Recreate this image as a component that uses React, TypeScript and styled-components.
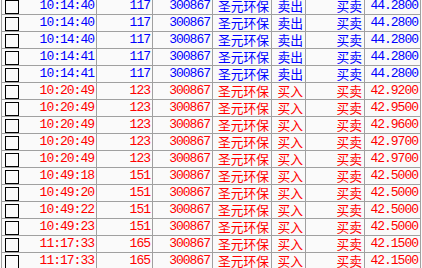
import React from "react";
import styled, { createGlobalStyle } from "styled-components";

type Trade = {
    time: string;
    qty: string;
    code: string;
    name: string;
    side: "卖出" | "买入";
    kind: string;
    price: string;
};

const trades: Trade[] = [
    { time: "10:14:40", qty: "117", code: "300867", name: "圣元环保", side: "卖出", kind: "买卖", price: "44.2800" },
    { time: "10:14:40", qty: "117", code: "300867", name: "圣元环保", side: "卖出", kind: "买卖", price: "44.2800" },
    { time: "10:14:40", qty: "117", code: "300867", name: "圣元环保", side: "卖出", kind: "买卖", price: "44.2800" },
    { time: "10:14:41", qty: "117", code: "300867", name: "圣元环保", side: "卖出", kind: "买卖", price: "44.2800" },
    { time: "10:14:41", qty: "117", code: "300867", name: "圣元环保", side: "卖出", kind: "买卖", price: "44.2800" },
    { time: "10:20:49", qty: "123", code: "300867", name: "圣元环保", side: "买入", kind: "买卖", price: "42.9200" },
    { time: "10:20:49", qty: "123", code: "300867", name: "圣元环保", side: "买入", kind: "买卖", price: "42.9500" },
    { time: "10:20:49", qty: "123", code: "300867", name: "圣元环保", side: "买入", kind: "买卖", price: "42.9600" },
    { time: "10:20:49", qty: "123", code: "300867", name: "圣元环保", side: "买入", kind: "买卖", price: "42.9700" },
    { time: "10:20:49", qty: "123", code: "300867", name: "圣元环保", side: "买入", kind: "买卖", price: "42.9700" },
    { time: "10:49:18", qty: "151", code: "300867", name: "圣元环保", side: "买入", kind: "买卖", price: "42.5000" },
    { time: "10:49:20", qty: "151", code: "300867", name: "圣元环保", side: "买入", kind: "买卖", price: "42.5000" },
    { time: "10:49:22", qty: "151", code: "300867", name: "圣元环保", side: "买入", kind: "买卖", price: "42.5000" },
    { time: "10:49:23", qty: "151", code: "300867", name: "圣元环保", side: "买入", kind: "买卖", price: "42.5000" },
    { time: "11:17:33", qty: "165", code: "300867", name: "圣元环保", side: "买入", kind: "买卖", price: "42.1500" },
    { time: "11:17:33", qty: "165", code: "300867", name: "圣元环保", side: "买入", kind: "买卖", price: "42.1500" },
];

function App(): React.ReactElement {
    return (
        <>
            <GlobalStyle />
            <Grid>
                {trades.map((t, i) => (
                    <Row key={i} $sell={t.side === "卖出"}>
                        <FirstCell>
                            <CheckBox />
                            <Num>{t.time}</Num>
                        </FirstCell>
                        <Cell><Num>{t.qty}</Num></Cell>
                        <Cell><Num>{t.code}</Num></Cell>
                        <Cell><Han>{t.name}</Han></Cell>
                        <Cell><Han>{t.side}</Han></Cell>
                        <Cell><Han>{t.kind}</Han></Cell>
                        <Cell><Num>{t.price}</Num></Cell>
                    </Row>
                ))}
            </Grid>
        </>
    );
}

const GlobalStyle = createGlobalStyle`
    html, body {
        margin: 0;
        padding: 0;
        background: #fafafa;
        overflow: hidden;
    }
`;

const Grid = styled.div`
    margin-top: -2px;
    margin-left: 1px;
    border-left: 1px solid #a0a0a0;
    width: 419px;
`;

const Row = styled.div<{ $sell: boolean }>`
    display: grid;
    grid-template-columns: 95px 56px 60px 59px 34px 59px 56px;
    height: 17px;
    box-sizing: border-box;
    border-bottom: 1px solid #a0a0a0;
    color: ${(p) => (p.$sell ? "#0000ff" : "#ff0000")};
`;

const Cell = styled.div`
    display: flex;
    align-items: center;
    justify-content: flex-end;
    box-sizing: border-box;
    border-right: 1px solid #a0a0a0;
    padding-right: 2px;
    height: 16px;
    white-space: nowrap;
`;

const FirstCell = styled(Cell)`
    justify-content: space-between;
    align-items: flex-start;
    padding-left: 3px;
`;

const CheckBox = styled.span`
    display: block;
    width: 14px;
    height: 14px;
    margin-top: 2px;
    box-sizing: border-box;
    border: 1px solid #000;
`;

const Num = styled.span`
    font-family: "Liberation Mono", monospace;
    font-size: 13px;
    letter-spacing: -1px;
    line-height: 16px;
`;

const Han = styled.span`
    font-family: "Noto Sans CJK SC", sans-serif;
    font-size: 12.75px;
    line-height: 16px;
`;

export default App;
